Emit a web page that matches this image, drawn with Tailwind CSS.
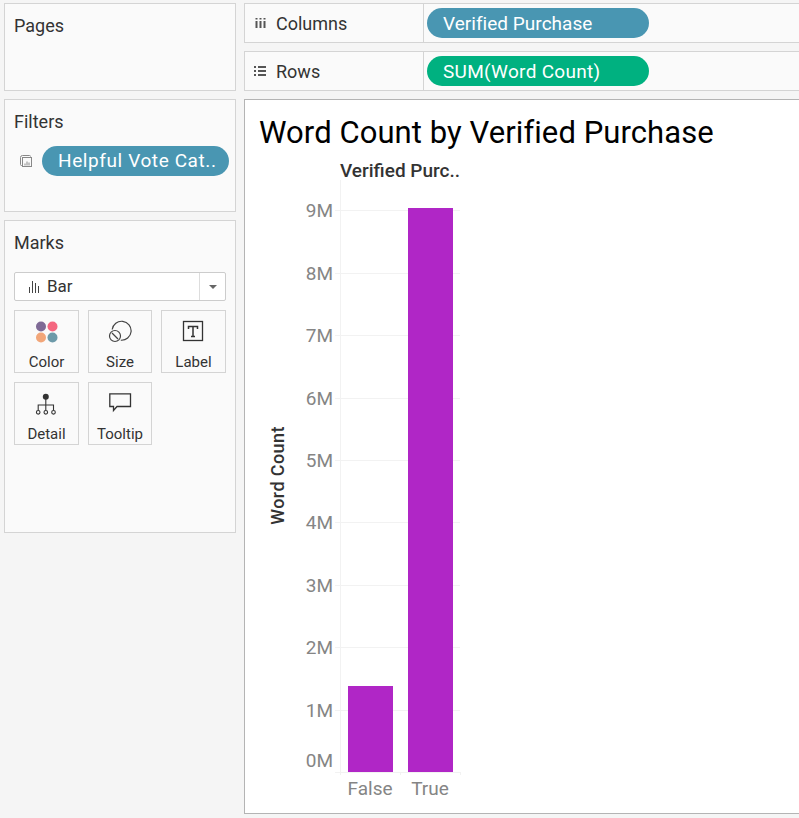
<!DOCTYPE html>
<html lang="en">
<head>
<meta charset="UTF-8" />
<title>Word Count by Verified Purchase</title>
<script src="https://cdn.jsdelivr.net/npm/@tailwindcss/browser@4"></script>
</head>
<body class="bg-[#f5f5f5] h-[818px] overflow-hidden font-['Roboto',sans-serif] text-[#333]">
<div class="flex gap-2 pt-[3px] pl-1 h-[818px]">
  <!-- Left cards -->
  <div class="w-[232px] shrink-0 flex flex-col gap-2">
    <div class="h-[88px] bg-[#fafafa] border border-[#d4d4d4] pl-[9px] pt-[10px] text-[18px] leading-6">Pages</div>
    <div class="h-[113px] bg-[#fafafa] border border-[#d4d4d4] pl-[9px] pt-[10px]">
      <div class="text-[18px] leading-6">Filters</div>
      <div class="flex items-center mt-[12px]">
        <svg class="ml-[6px] mr-[10px]" width="12" height="12" viewBox="0 0 12 12" fill="none" stroke="#888" stroke-width="1"><path d="M2.5 10.5h-1a1 1 0 0 1-1-1v-7a2 2 0 0 1 2-2h7a1 1 0 0 1 1 1"/><rect x="2.5" y="2.5" width="9" height="9"/><path d="M5 10.5v-2M7 10.5v-4M9 10.5v-3"/></svg>
        <div class="w-[187px] h-[30px] rounded-full bg-[#4996b2] text-white font-normal text-[19px] tracking-[.6px] leading-[30px] pl-4 whitespace-nowrap">Helpful Vote Cat..</div>
      </div>
    </div>
    <div class="h-[313px] bg-[#fafafa] border border-[#d4d4d4] pl-[9px] pr-[9px] pt-[10px]">
      <div class="text-[18px] leading-6">Marks</div>
      <div class="mt-[17px] h-[29px] w-[212px] flex items-center bg-white border border-[#ccc] rounded-[2px] text-[17px]">
        <svg class="ml-[14px] mr-[7px]" width="11" height="12" viewBox="0 0 11 12" stroke="#444" stroke-width="1"><path d="M.5 12V6M3.500 12V0M6.500 12V2M9.500 12V5"/></svg>
        <span class="flex-1">Bar</span>
        <div class="w-[26px] h-full border-l border-[#ddd] flex items-center justify-center">
          <div class="w-0 h-0 border-x-[4px] border-x-transparent border-t-[4px] border-t-[#666]"></div>
        </div>
      </div>
      <div class="mt-[9px] grid grid-cols-[65px_64px_65px] gap-x-[9px] gap-y-[9px] text-[15px]">
        <div class="h-[63px] border border-[#d4d4d4] flex flex-col items-center pt-[9px]">
          <svg width="24" height="24" viewBox="0 0 24 24"><circle cx="6" cy="6.500" r="5" fill="#7f6a96"/><circle cx="17.500" cy="6.500" r="5" fill="#f4667f"/><circle cx="6" cy="17.500" r="5" fill="#f2a679"/><circle cx="17.500" cy="17.500" r="5" fill="#6d9aa9"/></svg>
          <span class="leading-5 mt-[8px]">Color</span>
        </div>
        <div class="h-[63px] border border-[#d4d4d4] flex flex-col items-center pt-[9px]">
          <svg width="24" height="24" viewBox="0 0 24 24" fill="none" stroke="#444" stroke-width="1.2"><path d="M4.200 9.500A9.500 9.500 0 1 1 12.800 20.200"/><circle cx="7" cy="16" r="5.500"/><path d="M4 13l6 6"/></svg>
          <span class="leading-5 mt-[8px]">Size</span>
        </div>
        <div class="h-[63px] border border-[#d4d4d4] flex flex-col items-center pt-[9px]">
          <svg width="24" height="24" viewBox="0 0 24 24" fill="none" stroke="#333"><rect x="1.500" y="1.500" width="19" height="19" stroke-width="1.300"/><path d="M6.500 9V6.500h9V9M11 6.500v10M9 16.500h4" stroke-width="1.500"/></svg>
          <span class="leading-5 mt-[8px]">Label</span>
        </div>
        <div class="h-[63px] border border-[#d4d4d4] flex flex-col items-center pt-[9px]">
          <svg width="24" height="24" viewBox="0 0 24 24" fill="none" stroke="#333" stroke-width="1.100"><circle cx="10.800" cy="4.700" r="3" fill="#333" stroke="none"/><path d="M10.800 7v11M3.200 18v-5h15.300v5"/><circle cx="3.200" cy="20.300" r="1.800"/><circle cx="10.800" cy="20.300" r="1.800"/><circle cx="18.500" cy="20.300" r="1.800"/></svg>
          <span class="leading-5 mt-[8px]">Detail</span>
        </div>
        <div class="h-[63px] border border-[#d4d4d4] flex flex-col items-center pt-[9px]">
          <svg width="24" height="24" viewBox="0 0 24 24" fill="none" stroke="#333" stroke-width="1.300"><path d="M1.800 1.800H22.500V14.500H9l-3.500 4V14.500H1.800z"/></svg>
          <span class="leading-5 mt-[8px]">Tooltip</span>
        </div>
      </div>
    </div>
  </div>

  <!-- Right side -->
  <div class="flex-1 flex flex-col gap-2 min-w-0">
    <div class="h-10 bg-[#fafafa] border border-[#d4d4d4] border-r-0 flex items-center">
      <div class="w-[179px] h-full border-r border-[#d4d4d4] flex items-center text-[18px]">
        <svg class="ml-[10px] mr-[10px]" width="11" height="10" viewBox="0 0 11 10" stroke="#555" stroke-width="2"><path d="M1.500 3v7M5.500 3v7M9.500 3v7M1.500 0v1.500M5.500 0v1.500M9.500 0v1.500"/></svg>
        Columns
      </div>
      <div class="ml-[3px] w-[222px] h-[30px] rounded-full bg-[#4996b2] text-white font-normal text-[19px] tracking-[.03px] leading-[31px] pl-4">Verified Purchase</div>
    </div>
    <div class="h-10 bg-[#fafafa] border border-[#d4d4d4] border-r-0 flex items-center">
      <div class="w-[179px] h-full border-r border-[#d4d4d4] flex items-center text-[18px]">
        <svg class="ml-[9px] mr-[10px]" width="12" height="10" viewBox="0 0 12 10" stroke="#555" stroke-width="2"><path d="M0 1h2M0 5h2M0 9h2M4 1h8M4 5h8M4 9h8"/></svg>
        Rows
      </div>
      <div class="ml-[3px] w-[222px] h-[30px] rounded-full bg-[#00b180] text-white font-normal text-[19px] tracking-[.3px] leading-[31px] pl-4">SUM(Word Count)</div>
    </div>

    <!-- Chart sheet; offsets below are relative to this box at (244,99) -->
    <div class="relative h-[715px] bg-white border border-[#b4b4b4] border-r-0">
      <h1 class="absolute left-[14px] top-[13px] text-[31px] tracking-[.07px] leading-10 text-black font-normal whitespace-nowrap">Word Count by Verified Purchase</h1>
      <div class="absolute left-[95px] top-[61px] text-[19px] leading-5 font-medium whitespace-nowrap">Verified Purc..</div>
      <div class="absolute left-[95px] top-[80px] w-px h-[595px] bg-[#f2f2f2]"></div>
      <div class="absolute left-[155px] top-[672px] w-px h-[3px] bg-[#f2f2f2]"></div>
      <div class="absolute left-[215px] top-[672px] w-px h-[3px] bg-[#f2f2f2]"></div>

      <div class="absolute left-[90px] top-[110px] w-[125px] h-px bg-[#f2f2f2]"></div>
      <div class="absolute left-[90px] top-[173px] w-[125px] h-px bg-[#f2f2f2]"></div>
      <div class="absolute left-[90px] top-[235px] w-[125px] h-px bg-[#f2f2f2]"></div>
      <div class="absolute left-[90px] top-[298px] w-[125px] h-px bg-[#f2f2f2]"></div>
      <div class="absolute left-[90px] top-[360px] w-[125px] h-px bg-[#f2f2f2]"></div>
      <div class="absolute left-[90px] top-[422px] w-[125px] h-px bg-[#f2f2f2]"></div>
      <div class="absolute left-[90px] top-[485px] w-[125px] h-px bg-[#f2f2f2]"></div>
      <div class="absolute left-[90px] top-[547px] w-[125px] h-px bg-[#f2f2f2]"></div>
      <div class="absolute left-[90px] top-[610px] w-[125px] h-px bg-[#f2f2f2]"></div>
      <div class="absolute left-[90px] top-[672px] w-[125px] h-px bg-[#f2f2f2]"></div>

      <div class="absolute left-[40px] top-[101px] w-[48px] text-right text-[19px] leading-5 text-[#858585]">9M</div>
      <div class="absolute left-[40px] top-[164px] w-[48px] text-right text-[19px] leading-5 text-[#858585]">8M</div>
      <div class="absolute left-[40px] top-[226px] w-[48px] text-right text-[19px] leading-5 text-[#858585]">7M</div>
      <div class="absolute left-[40px] top-[289px] w-[48px] text-right text-[19px] leading-5 text-[#858585]">6M</div>
      <div class="absolute left-[40px] top-[351px] w-[48px] text-right text-[19px] leading-5 text-[#858585]">5M</div>
      <div class="absolute left-[40px] top-[413px] w-[48px] text-right text-[19px] leading-5 text-[#858585]">4M</div>
      <div class="absolute left-[40px] top-[476px] w-[48px] text-right text-[19px] leading-5 text-[#858585]">3M</div>
      <div class="absolute left-[40px] top-[538px] w-[48px] text-right text-[19px] leading-5 text-[#858585]">2M</div>
      <div class="absolute left-[40px] top-[601px] w-[48px] text-right text-[19px] leading-5 text-[#858585]">1M</div>
      <div class="absolute left-[40px] top-[651px] w-[48px] text-right text-[19px] leading-5 text-[#858585]">0M</div>

      <div class="absolute left-[103px] top-[586px] w-[45px] h-[86px] bg-[#b026c6]"></div>
      <div class="absolute left-[163px] top-[108px] w-[45px] h-[564px] bg-[#b026c6]"></div>

      <div class="absolute left-[95px] top-[679px] w-[60px] text-center text-[19px] leading-5 text-[#858585]">False</div>
      <div class="absolute left-[155px] top-[679px] w-[60px] text-center text-[19px] leading-5 text-[#858585]">True</div>

      <div class="absolute left-[22px] top-[375px] w-5 h-[1px] flex items-center justify-center">
        <span class="-rotate-90 whitespace-nowrap text-[18px] tracking-[.4px] font-medium">Word Count</span>
      </div>
    </div>
  </div>
</div>
</body>
</html>
